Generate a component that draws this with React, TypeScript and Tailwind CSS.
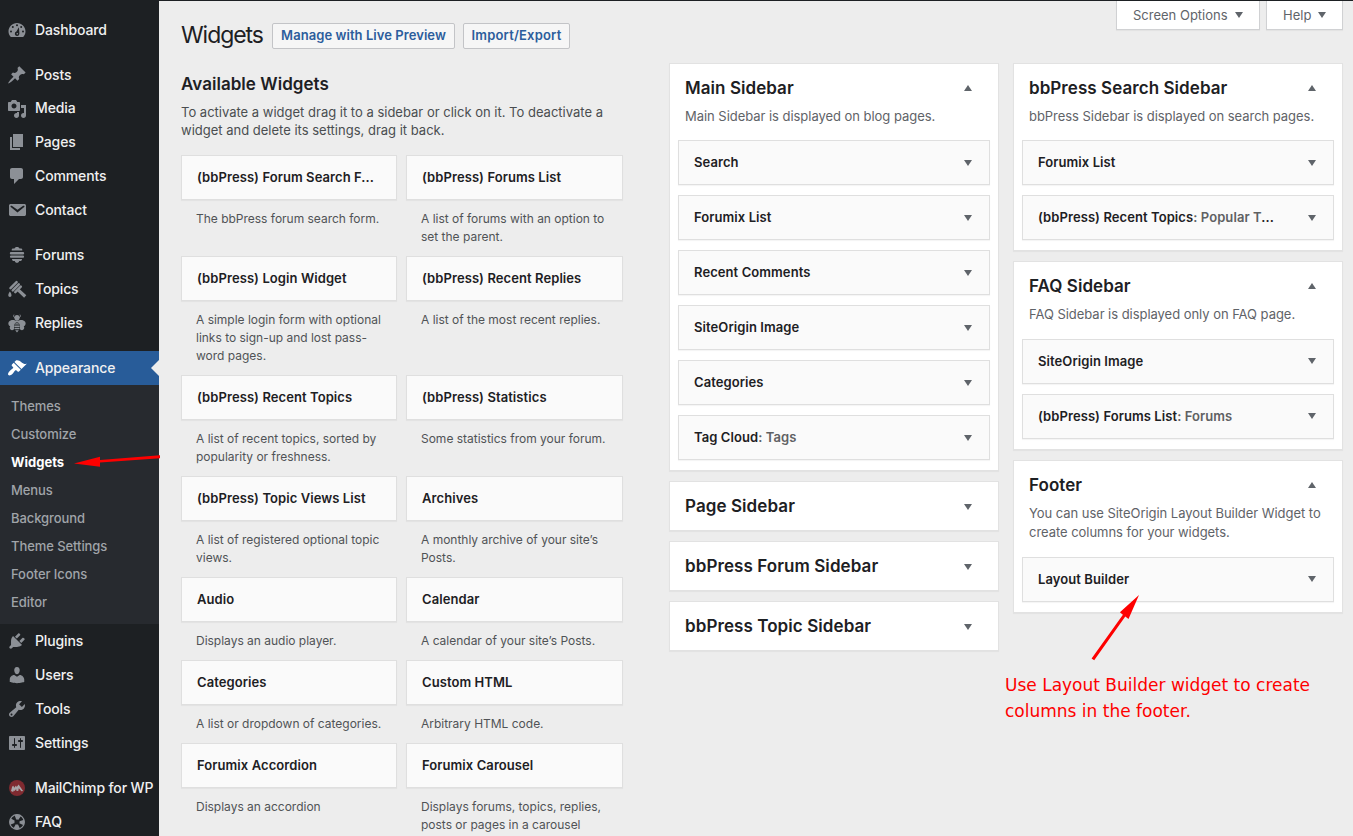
import React from "react";

const GLYPHS: Record<string, string> = {
  posts: "M10.44 3.02l1.82-1.82 6.36 6.35-1.83 1.82c-1.05-.68-2.48-.57-3.41.36l-.75.75c-.92.93-1.04 2.35-.35 3.41l-1.83 1.82-2.41-2.41-2.8 2.79c-.42.42-3.38 2.71-3.8 2.29s1.86-3.39 2.28-3.81l2.79-2.79L4.1 9.36l1.83-1.82c1.05.69 2.48.57 3.4-.36l.75-.75c.93-.92 1.05-2.35.36-3.41z",
  media: "M13 11V4c0-.55-.45-1-1-1h-1.67L9 1H5L3.67 3H2c-.55 0-1 .45-1 1v7c0 .55.45 1 1 1h10c.55 0 1-.45 1-1zM7 4.5c1.38 0 2.5 1.12 2.5 2.5S8.38 9.5 7 9.5 4.5 8.38 4.5 7 5.62 4.5 7 4.5zM14 6h5v10.5c0 1.38-1.12 2.5-2.5 2.5S14 17.88 14 16.5s1.12-2.5 2.5-2.5c.17 0 .34.02.5.05V9h-3V6zm-4 8.05V13h2v3.5c0 1.38-1.12 2.5-2.5 2.5S7 17.88 7 16.5 8.12 14 9.5 14c.17 0 .34.02.5.05z",
  pages: "M6 15V2h10v13H6zm-1 1h8v2H3V5h2v11z",
  comments: "M5 2h9c1.1 0 2 .9 2 2v7c0 1.1-.9 2-2 2h-2l-5 5v-5H5c-1.1 0-2-.9-2-2V4c0-1.1.9-2 2-2z",
  contact: "M3.87 4h13.25C18.37 4 19 4.59 19 5.79v8.42c0 1.19-.63 1.79-1.88 1.79H3.87c-1.25 0-1.88-.6-1.88-1.79V5.79c0-1.2.63-1.79 1.88-1.79zm6.62 8.6l6.74-5.53c.24-.2.43-.66.13-1.07-.29-.41-.82-.42-1.17-.17l-5.7 3.86L4.8 5.83c-.35-.25-.88-.24-1.17.17-.3.41-.11.87.13 1.07z",
  appearance: "M14.48 11.06L7.41 3.99l1.5-1.5c.5-.56 2.3-.47 3.51.32 1.21.8 1.43 1.28 2.91 2.1 1.18.64 2.45 1.26 4.45.85zm-.71.71L6.7 4.7 4.93 6.47c-.39.39-.39 1.02 0 1.41l1.06 1.06c.39.39.39 1.03 0 1.42-.6.6-1.43 1.11-2.21 1.69-.35.26-.7.53-1.01.84C1.43 14.23.4 16.08 1.4 17.07c.99 1 2.84-.03 4.18-1.36.31-.31.58-.66.85-1.02.57-.78 1.08-1.61 1.69-2.21.39-.39 1.02-.39 1.41 0l1.06 1.06c.39.39 1.02.39 1.41 0z",
  plugins: "M13.11 4.36L9.87 7.6 8 5.73l3.24-3.24c.35-.34 1.05-.2 1.56.32.52.51.66 1.21.31 1.55zm-8 1.77l.91-1.12 9.01 9.01-1.19.84c-.71.71-2.63 1.16-3.82 1.16H6.14L4.9 17.26c-.59.59-1.54.59-2.12 0-.59-.58-.59-1.53 0-2.12l1.24-1.24v-3.88c0-1.13.4-3.19 1.09-3.89zm7.26 3.97l3.24-3.24c.34-.35 1.04-.21 1.55.31.52.51.66 1.21.31 1.55l-3.24 3.25z",
  users: "M10 9.25c-2.27 0-2.73-3.44-2.73-3.44C7 4.02 7.82 2 9.97 2c2.16 0 2.98 2.02 2.71 3.81 0 0-.41 3.44-2.68 3.44zm0 2.57L12.72 10c2.39 0 4.52 2.33 4.52 4.53v2.49s-3.65 1.13-7.24 1.13c-3.65 0-7.24-1.13-7.24-1.13v-2.49c0-2.25 1.94-4.48 4.47-4.48z",
  tools: "M16.68 9.77c-1.34 1.34-3.3 1.67-4.95.99l-5.41 6.52c-.99.99-2.59.99-3.58 0s-.99-2.59 0-3.57l6.52-5.42c-.68-1.65-.35-3.61.99-4.95 1.28-1.28 3.12-1.62 4.72-1.06l-2.89 2.89 2.82 2.82 2.86-2.87c.53 1.58.18 3.39-1.08 4.65zM3.81 16.21c.4.39 1.04.39 1.43 0 .4-.4.4-1.04 0-1.43-.39-.4-1.03-.4-1.43 0-.39.39-.39 1.03 0 1.43z",
  settings: "M18 16V4c0-.55-.45-1-1-1H3c-.55 0-1 .45-1 1v12c0 .55.45 1 1 1h14c.55 0 1-.45 1-1zM8 11h1c.55 0 1 .45 1 1s-.45 1-1 1H8v1.5c0 .28-.22.5-.5.5s-.5-.22-.5-.5V13H6c-.55 0-1-.45-1-1s.45-1 1-1h1V5.5c0-.28.22-.5.5-.5s.5.22.5.5V11zm5-2h-1c-.55 0-1-.45-1-1s.45-1 1-1h1V5.5c0-.28.22-.5.5-.5s.5.22.5.5V7h1c.55 0 1 .45 1 1s-.45 1-1 1h-1v5.5c0 .28-.22.5-.5.5s-.5-.22-.5-.5V9z",
};

function Glyph({ name }: { name: string }) {
  let body: React.ReactNode;
  if (name === "dashboard") {
    body = (
      <>
        <path d="M3.8 17h12.4c1.4-1.4 2.3-3.3 2.3-5.5C18.5 6.8 14.7 3 10 3S1.5 6.8 1.5 11.5c0 2.2.9 4.1 2.3 5.5z" />
        <g fill="#1d2023">
          <circle cx="10" cy="5.2" r="1" />
          <circle cx="5.8" cy="7" r="1" />
          <circle cx="14.2" cy="7" r="1" />
          <circle cx="4" cy="11.5" r="1" />
          <circle cx="16" cy="11.5" r="1" />
          <path fillRule="evenodd" d="M11.9 7.2l.5 6.4a2.3 2.3 0 1 1-3-2.1zM10.300 12.900a.8.800 0 1 0 0 1.600.8.800 0 0 0 0-1.600z" />
        </g>
      </>
    );
  } else if (name === "forums") {
    body = (
      <path d="M7.5 3.6c.2-1 1-1.600 2.500-1.600s2.300.6 2.500 1.600h1.500c.8 0 1.300.6 1.300 1.400v.6H4.700V5c0-.8.5-1.400 1.300-1.400zM4 7h12a1.200 1.200 0 0 1 0 2.400H4A1.200 1.200 0 0 1 4 7zM4 10.600h12a1.100 1.100 0 0 1 0 2.200H4a1.100 1.100 0 0 1 0-2.200zM5 14h10c0 1.400-.7 2-1.800 2h-1c-.2 1-.9 1.800-2.200 1.800S8 17 7.800 16h-1C5.700 16 5 15.400 5 14z" />
    );
  } else if (name === "topics") {
    body = (
      <>
        <g fill="none" stroke="currentColor" strokeWidth="2.5" strokeLinecap="round">
          <path d="M3.500 9.200L9.600 3.100M5.800 11.300l6-6M8.300 13.200l5.500-5.500" />
        </g>
        <path d="M10.300 12.200l2.200-2.200 6.800 6.300-2.200 2.400zM2.900 12.500c1 1.500 1.600 2.700 1.600 3.700 0 1-.7 1.700-1.600 1.700s-1.600-.7-1.600-1.700c0-1 .6-2.200 1.600-3.700z" />
      </>
    );
  } else if (name === "replies") {
    body = (
      <>
        <g fill="none" stroke="currentColor" strokeWidth=".9" strokeLinecap="round">
          <path d="M8 4.800C6.600 4.300 6.200 3 6.800 2M12 4.800c1.400-.5 1.800-1.800 1.200-2.800" />
        </g>
        <circle cx="10" cy="4.700" r="2.600" />
        <path d="M9.200 8.300C7.200 6.400 3.400 6.800 1.900 8.800c-1.300 1.900-.1 4.200 1.400 4.500-1.300 1.500-.1 3.900 1.700 3.900 1.200 0 2.500-.9 2.800-2.200zM10.800 8.300c2-1.900 5.800-1.500 7.300.5 1.300 1.900.1 4.200-1.400 4.500 1.300 1.500.1 3.900-1.700 3.900-1.200 0-2.500-.9-2.800-2.200z" />
        <path d="M7.800 8c1.300-.9 3.100-.9 4.400 0l-.8 1.800H8.600z" />
        <ellipse cx="10" cy="14.300" rx="3" ry="4.700" fill="#1d2023" />
        <path d="M8.600 10.200h2.800l.8 1.400H7.800zM7.400 12.500h5.200l.2 1.400H7.200zM7.300 14.800h5.400l-.4 1.500H7.700zM8.200 17.200h3.600L10 19.400z" />
      </>
    );
  } else if (name === "mailchimp") {
    body = (
      <>
        <circle cx="10" cy="10" r="8" fill="#7f2a30" />
        <path d="M4 13l1.200-4.500 1.200-.7.800 2 1.800-2.300.7 1.500 1.900-2.500 4.500 6.500-1.700.3-2.600-3-.5 2.700H9.500l-.4-2-1.500 2-.8-.5-.7 1.500z" fill="#a9a4a7" />
      </>
    );
  } else if (name === "faq") {
    body = (
      <>
        <circle cx="10" cy="10" r="7.300" fill="none" stroke="currentColor" strokeWidth="1.300" />
        <circle cx="10" cy="10" r="5" fill="none" stroke="currentColor" strokeWidth="4.800" strokeDasharray="4.600 3.254" strokeDashoffset="2.300" />
        <circle cx="10" cy="10" r="1.600" fill="#1d2023" />
      </>
    );
  } else {
    body = <path fillRule="evenodd" d={GLYPHS[name]} />;
  }
  return (
    <svg viewBox="0 0 20 20" className="mt-[2px] size-5 shrink-0" fill="currentColor">
      {body}
    </svg>
  );
}

function MenuItem({ name, label, active, tight }: { name: string; label: string; active?: boolean; tight?: boolean }) {
  return (
    <a
      className={
        active
          ? "relative flex h-[34px] items-center gap-2 bg-[#285c99] pb-[2px] pl-[7px] text-white"
          : tight
            ? "flex h-[33px] items-center gap-2 pb-[2px] pl-[7px] text-[#8c9096]"
            : "flex h-[34px] items-center gap-2 pb-[2px] pl-[7px] text-[#8c9096]"
      }
    >
      <Glyph name={name} />
      <span className="text-[14px] font-medium tracking-[-0.13px] whitespace-nowrap text-[#f0f0f1]">{label}</span>
      {active && (
        <svg viewBox="0 0 8 16" className="absolute top-[9px] right-0 h-4 w-2" fill="#ededed">
          <path d="M8 0v16L0 8z" />
        </svg>
      )}
    </a>
  );
}

const SUBMENU = ["Themes", "Customize", "Widgets", "Menus", "Background", "Theme Settings", "Footer Icons", "Editor"];

function Sidebar() {
  return (
    <nav className="flex h-[836px] w-[159px] shrink-0 flex-col overflow-hidden bg-[#1d2023]">
      <div className="pt-[13px]">
        <MenuItem name="dashboard" label="Dashboard" />
      </div>
      <div className="pt-[11px]">
        <MenuItem name="posts" label="Posts" />
        <MenuItem name="media" label="Media" tight />
        <MenuItem name="pages" label="Pages" />
        <MenuItem name="comments" label="Comments" />
        <MenuItem name="contact" label="Contact" />
      </div>
      <div className="pt-[11px]">
        <MenuItem name="forums" label="Forums" />
        <MenuItem name="topics" label="Topics" />
        <MenuItem name="replies" label="Replies" />
      </div>
      <div className="pt-[11px]">
        <MenuItem name="appearance" label="Appearance" active />
        <ul className="bg-[#272a2f] pt-2 pb-[7px]">
          {SUBMENU.map((item) => (
            <li
              key={item}
              className={
                item === "Widgets"
                  ? "flex h-7 items-center pl-[11px] text-[13px] font-bold text-white"
                  : "flex h-7 items-center pl-[11px] text-[13px] font-medium tracking-[-0.07px] text-[#a0a4a9]"
              }
            >
              {item}
            </li>
          ))}
        </ul>
        <MenuItem name="plugins" label="Plugins" />
        <MenuItem name="users" label="Users" />
        <MenuItem name="tools" label="Tools" />
        <MenuItem name="settings" label="Settings" />
      </div>
      <div className="pt-[11px]">
        <MenuItem name="mailchimp" label="MailChimp for WP" />
        <MenuItem name="faq" label="FAQ" />
      </div>
    </nav>
  );
}

function Caret({ up }: { up?: boolean }) {
  return (
    <svg viewBox="0 0 8 6" className="h-[6px] w-2 shrink-0" fill="#5f646a">
      <path d={up ? "M4 0L8 6H0z" : "M0 0h8L4 6z"} />
    </svg>
  );
}

type Available = { title: string; lines: string[] };

const AVAILABLE: [Available, Available][] = [
  [
    { title: "(bbPress) Forum Search F...", lines: ["The bbPress forum search form."] },
    { title: "(bbPress) Forums List", lines: ["A list of forums with an option to", "set the parent."] },
  ],
  [
    { title: "(bbPress) Login Widget", lines: ["A simple login form with optional", "links to sign-up and lost pass-", "word pages."] },
    { title: "(bbPress) Recent Replies", lines: ["A list of the most recent replies."] },
  ],
  [
    { title: "(bbPress) Recent Topics", lines: ["A list of recent topics, sorted by", "popularity or freshness."] },
    { title: "(bbPress) Statistics", lines: ["Some statistics from your forum."] },
  ],
  [
    { title: "(bbPress) Topic Views List", lines: ["A list of registered optional topic", "views."] },
    { title: "Archives", lines: ["A monthly archive of your site’s", "Posts."] },
  ],
  [
    { title: "Audio", lines: ["Displays an audio player."] },
    { title: "Calendar", lines: ["A calendar of your site’s Posts."] },
  ],
  [
    { title: "Categories", lines: ["A list or dropdown of categories."] },
    { title: "Custom HTML", lines: ["Arbitrary HTML code."] },
  ],
  [
    { title: "Forumix Accordion", lines: ["Displays an accordion"] },
    { title: "Forumix Carousel", lines: ["Displays forums, topics, replies,", "posts or pages in a carousel"] },
  ],
];

function AvailableWidget({ title, lines }: Available) {
  return (
    <div>
      <div className="flex h-[45px] items-center border border-[#dfdfdf] bg-[#fafafa] pl-[15px] text-[13px] font-semibold tracking-[0.08px] whitespace-nowrap text-[#1d2023] shadow-[0_1px_1px_rgba(0,0,0,0.04)]">
        {title}
      </div>
      <div className="pt-[10px] pb-[10px] pl-[15px] text-[12px] leading-[18px] tracking-[-0.01px] whitespace-nowrap text-[#505356]">
        {lines.map((line) => (
          <p key={line}>{line}</p>
        ))}
      </div>
    </div>
  );
}

type Widget = { name: string; suffix?: string; ellipsis?: boolean };

function Panel({ title, lines, widgets }: { title: string; lines?: string[]; widgets?: Widget[] }) {
  if (!widgets) {
    return (
      <section className="flex h-[50px] w-[330px] items-center justify-between border border-[#e2e2e2] bg-white pr-[26px] pl-[15px] shadow-[0_1px_1px_rgba(0,0,0,0.04)]">
        <h3 className="pt-[1px] text-[17px] font-semibold tracking-[0.08px] text-[#1d2023]">{title}</h3>
        <div className="pt-[2px]">
          <Caret />
        </div>
      </section>
    );
  }
  return (
    <section className="w-[330px] border border-[#e2e2e2] bg-white px-2 pb-[10px] shadow-[0_1px_1px_rgba(0,0,0,0.04)]">
      <div className="flex h-[42px] items-center justify-between pt-[6px] pr-[18px] pl-[7px]">
        <h3 className="pt-[1.2px] text-[17px] font-semibold tracking-[0.06px] text-[#1d2023]">{title}</h3>
        <Caret up />
      </div>
      <div className="pt-px pb-[13.95px] pl-[7px] text-[13px] leading-[19.5px] tracking-[-0.04px] whitespace-nowrap text-[#5f6368]">
        {lines!.map((line) => (
          <p key={line}>{line}</p>
        ))}
      </div>
      <div className="flex flex-col gap-[10px]">
        {widgets.map((w) => (
          <div
            key={w.name}
            className="flex h-[45px] items-center justify-between border border-[#dfdfdf] bg-[#fafafa] pr-[17px] pl-[15px] shadow-[0_1px_1px_rgba(0,0,0,0.04)]"
          >
            <span className="text-[13px] font-semibold tracking-[0.08px] whitespace-nowrap text-[#1d2023]">
              {w.name}
              {w.suffix && <span className="text-[#5f6163]">: {w.suffix}</span>}
              {w.ellipsis && "..."}
            </span>
            <Caret />
          </div>
        ))}
      </div>
    </section>
  );
}

const SCREEN_TABS = [
  { label: "Screen Options", width: "w-[144px]" },
  { label: "Help", width: "w-[77px]" },
];

export default function App() {
  return (
    <div className="relative flex h-[836px] w-[1353px] overflow-hidden bg-[#ededed] font-['Inter',sans-serif]">
      <Sidebar />
      <main className="flex flex-1 border-t border-[#1d2023]">
        <div className="w-[510px] shrink-0 pl-[22px]">
          <header className="flex h-[70px] items-center pb-px">
            <h1 className="w-[91px] text-[23px] tracking-[-1.05px] whitespace-nowrap text-[#1d2023]">Widgets</h1>
            <a className="flex h-[26px] w-[183px] items-center justify-center rounded-[2px] border border-[#c3c4c7] bg-[#f6f6f6] text-[13px] font-semibold tracking-[0.06px] whitespace-nowrap text-[#2c5d9c]">
              Manage with Live Preview
            </a>
            <a className="ml-2 flex h-[26px] w-[107px] items-center justify-center rounded-[2px] border border-[#c3c4c7] bg-[#f6f6f6] text-[13px] font-semibold tracking-[0.18px] whitespace-nowrap text-[#2c5d9c]">
              Import/Export
            </a>
          </header>
          <h2 className="h-[32px] text-[17px] leading-[27px] font-semibold tracking-[0.04px] text-[#1d2023]">Available Widgets</h2>
          <div className="h-[52px] text-[13px] leading-[18px] whitespace-nowrap text-[#4a4d50]">
            <p>To activate a widget drag it to a sidebar or click on it. To deactivate a</p>
            <p>widget and delete its settings, drag it back.</p>
          </div>
          <div className="flex flex-col">
            {AVAILABLE.map(([a, b]) => (
              <div key={a.title} className="grid grid-cols-[216px_217px] gap-[9px]">
                <AvailableWidget {...a} />
                <AvailableWidget {...b} />
              </div>
            ))}
          </div>
        </div>
        <div className="flex shrink-0 flex-col gap-[10px] pt-[62px]">
          <Panel
            title="Main Sidebar"
            lines={["Main Sidebar is displayed on blog pages."]}
            widgets={[
              { name: "Search" },
              { name: "Forumix List" },
              { name: "Recent Comments" },
              { name: "SiteOrigin Image" },
              { name: "Categories" },
              { name: "Tag Cloud", suffix: "Tags" },
            ]}
          />
          <Panel title="Page Sidebar" />
          <Panel title="bbPress Forum Sidebar" />
          <Panel title="bbPress Topic Sidebar" />
        </div>
        <div className="ml-[14px] shrink-0">
          <div className="flex h-[62px] items-start justify-end gap-[6px]">
            {SCREEN_TABS.map((tab) => (
              <div
                key={tab.label}
                className={`${tab.width} flex h-[29px] items-center justify-between border border-t-0 border-[#d0d1d3] bg-white pr-4 pl-4 text-[13px] text-[#5f646a] shadow-[0_1px_1px_rgba(0,0,0,0.04)]`}
              >
                <span className="pt-[2px]">{tab.label}</span>
                <Caret />
              </div>
            ))}
          </div>
          <div className="flex flex-col gap-[10px]">
            <Panel
              title="bbPress Search Sidebar"
              lines={["bbPress Sidebar is displayed on search pages."]}
              widgets={[{ name: "Forumix List" }, { name: "(bbPress) Recent Topics", suffix: "Popular T", ellipsis: true }]}
            />
            <Panel
              title="FAQ Sidebar"
              lines={["FAQ Sidebar is displayed only on FAQ page."]}
              widgets={[{ name: "SiteOrigin Image" }, { name: "(bbPress) Forums List", suffix: "Forums" }]}
            />
            <Panel
              title="Footer"
              lines={["You can use SiteOrigin Layout Builder Widget to", "create columns for your widgets."]}
              widgets={[{ name: "Layout Builder" }]}
            />
          </div>
        </div>
      </main>

      <svg viewBox="0 0 90 20" className="absolute top-[450px] left-[72px] h-5 w-[90px]" fill="#fe0000">
        <path d="M2 13.500l26-6.800v3.200l60-4.700v3L28 12.500v4.300z" />
      </svg>
      <svg viewBox="0 0 60 70" className="absolute top-[592px] left-[1085px] h-[70px] w-[60px]" fill="#fe0000">
        <path d="M54 3L43.500 27l-3.200-2.600L9.200 68.200 6.600 66.500 37.900 22.700l-3-2.500z" />
      </svg>
      <div className="absolute top-[672px] left-[1005px] font-['DejaVu_Sans',sans-serif] text-[17px] leading-[26px] whitespace-nowrap text-[#fe0000]">
        <p>Use Layout Builder widget to create</p>
        <p>columns in the footer.</p>
      </div>
    </div>
  );
}
